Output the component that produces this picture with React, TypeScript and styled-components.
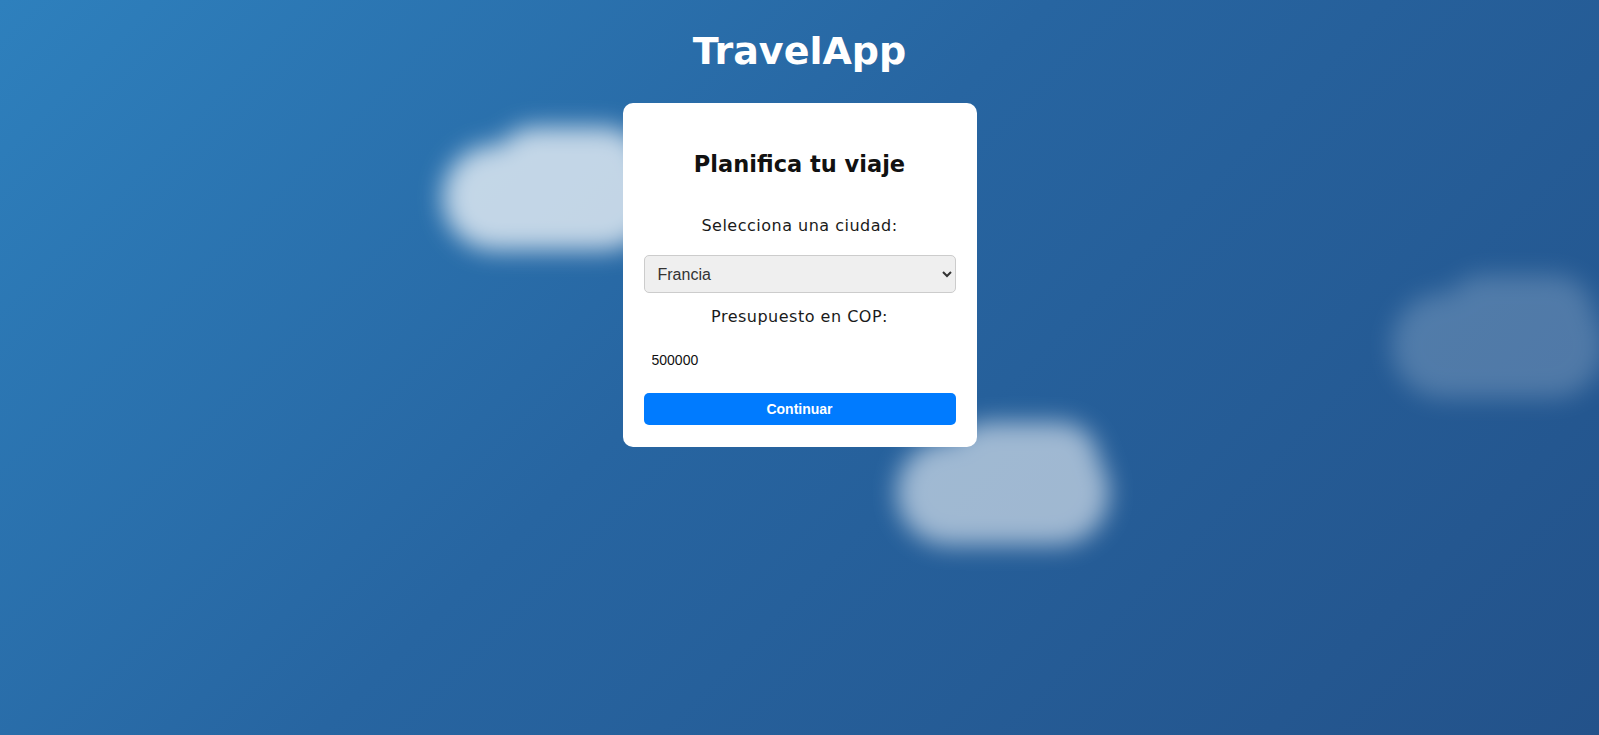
import React, { useState } from "react";
import styled, { createGlobalStyle } from "styled-components";

// Types
type CloudProps = {
  $top: number;
  $left: number;
  $opacity: number;
};

// Data
const Cities = ["Francia", "Italia", "España", "Japón", "Estados Unidos"];

const Clouds: CloudProps[] = [
  { $top: 145, $left: 443, $opacity: 0.72 },
  { $top: 440, $left: 897, $opacity: 0.56 },
  { $top: 293, $left: 1392, $opacity: 0.2 },
];

// Styled Components
const GlobalStyle = createGlobalStyle`
  html, body {
    margin: 0;
    padding: 0;
  }

  body {
    font-family: "DejaVu Sans", "Noto Sans", sans-serif;
    background: linear-gradient(135deg, #2e80bd 0%, #2765a1 45%, #23528a 100%);
    min-height: 100vh;
    overflow: hidden;
  }
`;

const Page = styled.main`
  position: relative;
  min-height: 100vh;
  display: flex;
  flex-direction: column;
  align-items: center;
  padding-top: 27px;
  box-sizing: border-box;
`;

const Cloud = styled.div<CloudProps>`
  position: absolute;
  top: ${({ $top }) => $top}px;
  left: ${({ $left }) => $left}px;
  width: 212px;
  height: 105px;
  border-radius: 52px;
  background: #fff;
  opacity: ${({ $opacity }) => $opacity};
  filter: blur(12px);
  z-index: 0;

  &::before {
    content: "";
    position: absolute;
    top: -18px;
    left: 52px;
    width: 150px;
    height: 80px;
    border-radius: 40px;
    background: #fff;
  }
`;

const AppTitle = styled.h1`
  position: relative;
  z-index: 1;
  margin: 0 0 28px;
  font-family: "DejaVu Sans", sans-serif;
  font-size: 38px;
  font-weight: 700;
  line-height: 48px;
  color: #fff;
`;

const Card = styled.section`
  position: relative;
  z-index: 1;
  width: 354px;
  box-sizing: border-box;
  padding: 20px 21px 22px;
  background: #fff;
  border-radius: 10px;
  display: flex;
  flex-direction: column;
  align-items: stretch;
  text-align: center;
`;

const CardTitle = styled.h2`
  margin: 22px 0 31px;
  font-size: 22.5px;
  font-weight: 700;
  line-height: 38px;
  color: #111;
`;

const FieldLabel = styled.label<{ $gap: number }>`
  display: block;
  margin-bottom: ${({ $gap }) => $gap}px;
  font-size: 16px;
  letter-spacing: 0.5px;
  line-height: 24px;
  color: #1a1a1a;
`;

const CitySelect = styled.select`
  height: 38px;
  margin-bottom: 12px;
  padding: 0 9px;
  border: 1px solid #ccc;
  border-radius: 5px;
  background: #efefef;
  font-family: "Liberation Sans", Arial, sans-serif;
  font-size: 16px;
  color: #333;
`;

const BudgetInput = styled.input`
  height: 36px;
  margin-bottom: 15px;
  padding: 0 8px;
  border: none;
  outline: none;
  background: transparent;
  font-family: "Liberation Sans", Arial, sans-serif;
  font-size: 14px;
  color: #111;
`;

const SubmitButton = styled.button`
  height: 32px;
  border: none;
  border-radius: 5px;
  background: #007bff;
  color: #fff;
  font-family: "Liberation Sans", Arial, sans-serif;
  font-size: 14px;
  font-weight: 700;
  cursor: pointer;

  &:hover {
    background: #0069d9;
  }
`;

const App: React.FC = () => {
  const [city, setCity] = useState("Francia");
  const [budget, setBudget] = useState("500000");

  return (
    <>
      <GlobalStyle />
      <Page>
        {Clouds.map((cloud, index) => (
          <Cloud key={index} {...cloud} />
        ))}

        <AppTitle>TravelApp</AppTitle>

        <Card>
          <CardTitle>Planifica tu viaje</CardTitle>

          <FieldLabel htmlFor="city" $gap={17}>
            Selecciona una ciudad:
          </FieldLabel>
          <CitySelect
            id="city"
            value={city}
            onChange={(e) => setCity(e.target.value)}
          >
            {Cities.map((item) => (
              <option key={item} value={item}>
                {item}
              </option>
            ))}
          </CitySelect>

          <FieldLabel htmlFor="budget" $gap={13}>
            Presupuesto en COP:
          </FieldLabel>
          <BudgetInput
            id="budget"
            type="number"
            value={budget}
            onChange={(e) => setBudget(e.target.value)}
          />

          <SubmitButton type="button">Continuar</SubmitButton>
        </Card>
      </Page>
    </>
  );
};

export default App;
